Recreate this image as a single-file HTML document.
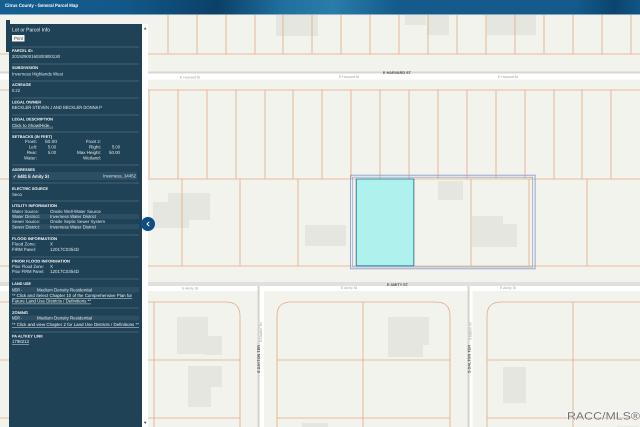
<!DOCTYPE html>
<html><head><meta charset="utf-8"><title>Citrus County - General Parcel Map</title>
<style>
html,body{margin:0;padding:0;width:640px;height:427px;overflow:hidden;background:#f3f3ee}
svg{display:block;filter:blur(.25px)}
text{font-family:"Liberation Sans",sans-serif;text-rendering:geometricPrecision}
.h{font-size:3.9px;font-weight:bold;fill:#f7f9fa}
.v{font-size:4.5px;fill:#dfe6ea}
.u{font-size:4.5px;fill:#eef2f4;text-decoration:underline}
.d{stroke:#4c6c7d;stroke-width:.7}
.l{stroke:#e3ab82;stroke-width:.8;fill:none}
.b{fill:#e6e6e1}
.s{font-size:3.4px;fill:#999}
.r{font-size:3.9px;font-weight:bold;fill:#555}
</style></head><body>
<svg width="640" height="427" viewBox="0 0 640 427" xmlns="http://www.w3.org/2000/svg">
<defs><linearGradient id="hd" x1="0" x2="1" y1="0" y2="0">
<stop offset="0" stop-color="#155f90"/><stop offset=".2" stop-color="#125788"/><stop offset=".34" stop-color="#0b4067"/><stop offset=".44" stop-color="#206f9f"/><stop offset=".52" stop-color="#2b7ca8"/><stop offset=".62" stop-color="#145b8c"/><stop offset=".9" stop-color="#145a8b"/><stop offset=".96" stop-color="#0c446f"/><stop offset="1" stop-color="#125585"/>
</linearGradient></defs>
<rect width="640" height="427" fill="#f3f3ee"/>
<!-- roads -->
<rect x="0" y="71.500" width="640" height="1.800" fill="#d6d6d2"/>
<rect x="0" y="74" width="640" height="5.500" fill="#fff"/>
<rect x="0" y="282" width="640" height="4" fill="#e0e0dc"/>
<rect x="0" y="286" width="640" height="5" fill="#fff"/>
<rect x="260" y="286" width="4" height="141" fill="#fff"/>
<rect x="470" y="286" width="2.500" height="141" fill="#fff"/>
<rect x="257.500" y="286" width="2" height="141" fill="#d4d4d1"/>
<rect x="467.500" y="286" width="2" height="141" fill="#d4d4d1"/>
<!-- buildings -->
<g class="b">
<rect x="276" y="15" width="42" height="21"/><rect x="405" y="15" width="21" height="10"/><rect x="427" y="15" width="22" height="20"/><rect x="487" y="15" width="49" height="20"/>
<rect x="168" y="193" width="42" height="27"/><rect x="153" y="202" width="36" height="26"/><rect x="305" y="225" width="41" height="21"/>
<rect x="438" y="181" width="25" height="19"/><rect x="472" y="216" width="31" height="30"/><rect x="472" y="224" width="45" height="23"/>
<rect x="177" y="317" width="31" height="37"/><rect x="205" y="336" width="17" height="19"/><rect x="188" y="366" width="34" height="21"/><rect x="188" y="385" width="23" height="22"/>
<rect x="302" y="423" width="26" height="4"/><rect x="388" y="317" width="41" height="28"/><rect x="388" y="345" width="35" height="12"/><rect x="503" y="367" width="23" height="36"/><rect x="617" y="426" width="21" height="1"/>
</g>
<!-- parcel lines -->
<path class="l" d="M0 54H640M168 15V54M197 15V54M226 15V54M255 15V54M283 15V54M312 15V54M341 15V54M370 15V54M399 15V54M428 15V54M457 15V54M486 15V54M515 15V54M544 15V54M573 15V54M602 15V54M631 15V54"/>
<path class="l" d="M0 90H640M149 90V179M178 90V179M207 90V179M236 90V179M265 90V179M293 90V179M322 90V179M351 90V179M380 90V179M409 90V179M438 90V179M467 90V179M496 90V179M525 90V179M554 90V179M582 90V179M611 90V179"/>
<path class="l" d="M0 179H640M0 266H640M182 179V266M240 179V266M298 179V266M356 179V266M414 179V266M471 179V266M529 179V266M587 179V266"/>
<path class="l" d="M0 302H226Q240 302 240 316V427M154 302V427M0 360H240M0 418H240"/>
<path class="l" d="M291 302H436Q450 302 450 316V427M291 302Q277 302 277 316V427M363 302V427M277 360H450M277 418H450"/>
<path class="l" d="M501 302H640M501 302Q487 302 487 316V427M573 302V427M487 360H640M487 418H640"/>
<!-- selection -->
<rect x="350.500" y="175.200" width="184.600" height="93.600" fill="none" stroke="#8d9fc9" stroke-width=".9"/>
<rect x="352.700" y="177.200" width="180" height="89.800" fill="none" stroke="#8d9fc9" stroke-width=".7"/>
<rect x="356.300" y="179" width="57.500" height="86.800" fill="#aef1ed" stroke="#2b7fa6" stroke-width=".9"/>
<!-- road labels -->
<text class="s" x="180" y="78.500" textLength="20" lengthAdjust="spacingAndGlyphs">E Harvard St</text>
<text class="s" x="339" y="78.200" textLength="20" lengthAdjust="spacingAndGlyphs">E Harvard St</text>
<text class="s" x="498" y="77.800" textLength="20" lengthAdjust="spacingAndGlyphs">E Harvard St</text>
<text class="r" x="383" y="74" textLength="28" lengthAdjust="spacingAndGlyphs">E HARVARD ST</text>
<text class="s" x="182" y="289.500" textLength="16" lengthAdjust="spacingAndGlyphs">E Amity St</text>
<text class="s" x="341" y="289" textLength="16" lengthAdjust="spacingAndGlyphs">E Amity St</text>
<text class="s" x="500" y="288.800" textLength="16" lengthAdjust="spacingAndGlyphs">E Amity St</text>
<text class="r" x="387" y="285.800" textLength="21" lengthAdjust="spacingAndGlyphs">E AMITY ST</text>
<text class="r" transform="translate(260 373) rotate(-90)" textLength="28" lengthAdjust="spacingAndGlyphs">S DAYTON TER</text>
<text class="s" transform="translate(262 342) rotate(-90)" textLength="20" lengthAdjust="spacingAndGlyphs">S Dayton Ter</text>
<text class="r" transform="translate(470.500 373) rotate(-90)" textLength="28" lengthAdjust="spacingAndGlyphs">S DALTON TER</text>
<text class="s" transform="translate(471.500 340) rotate(-90)" textLength="18" lengthAdjust="spacingAndGlyphs">S Dalton Ter</text>
<!-- header -->
<rect width="640" height="14.500" fill="url(#hd)"/>
<text x="5" y="6.900" font-size="4.800" font-weight="bold" fill="#f6f9fb" textLength="73" lengthAdjust="spacingAndGlyphs">Citrus County - General Parcel Map</text>
<!-- panel -->
<rect x="6" y="20" width="4" height="32" fill="#1f4256"/>
<rect x="142" y="24" width="6" height="403" fill="#fff"/>
<rect x="9" y="24" width="133" height="403" fill="#1f4256"/>
<path d="M143.700 29.500L145.200 27.300L146.700 29.500Z" fill="#555"/>
<path d="M143.700 421.700L145.200 424L146.700 421.700Z" fill="#555"/>
<text x="12" y="31.500" font-size="5.400" fill="#eaeff2" textLength="38" lengthAdjust="spacingAndGlyphs">Lot or Parcel Info</text>
<rect x="12" y="35" width="12.500" height="6.500" fill="#f6f6f6"/>
<text x="14" y="40" font-size="4.500" fill="#333" textLength="9" lengthAdjust="spacingAndGlyphs">Print</text>
<path class="d" d="M12 47H139M12 64H139M12 81H139M12 98H139M12 115H139M12 132H139M12 165H139M12 183H139M12 201H139M12 235H139M12 257H139M12 279H139M12 308H139M12 332H139"/>
<rect x="12" y="172" width="125" height="8" fill="#2c4f63"/>
<rect x="12" y="214" width="127" height="5" fill="#2c4f63"/>
<rect x="12" y="224.200" width="127" height="5" fill="#2c4f63"/>
<rect x="12" y="287" width="127" height="5.500" fill="#2c4f63"/>
<rect x="12" y="315.500" width="127" height="5" fill="#2c4f63"/>
<text class="h" x="12" y="52" textLength="21" lengthAdjust="spacingAndGlyphs">PARCEL ID:</text>
<text class="v" x="12" y="58" textLength="48" lengthAdjust="spacingAndGlyphs">20192900160300800130</text>
<text class="h" x="12" y="69" textLength="26" lengthAdjust="spacingAndGlyphs">SUBDIVISION</text>
<text class="v" x="12" y="75.300" textLength="51" lengthAdjust="spacingAndGlyphs">Inverness Highlands West</text>
<text class="h" x="12" y="86.200" textLength="19" lengthAdjust="spacingAndGlyphs">ACREAGE</text>
<text class="v" x="12" y="92" textLength="8" lengthAdjust="spacingAndGlyphs">0.22</text>
<text class="h" x="12" y="103.300" textLength="29" lengthAdjust="spacingAndGlyphs">LEGAL OWNER</text>
<text class="v" x="12" y="109" textLength="90" lengthAdjust="spacingAndGlyphs">BECKLER STEVEN J AND BECKLER DONNA P</text>
<text class="h" x="12" y="120.700" textLength="41" lengthAdjust="spacingAndGlyphs">LEGAL DESCRIPTION</text>
<text class="u" x="12" y="126.800" textLength="41" lengthAdjust="spacingAndGlyphs">Click to Show/Hide...</text>
<text class="h" x="12" y="137.800" textLength="40" lengthAdjust="spacingAndGlyphs">SETBACKS (IN FEET)</text>
<text class="v" x="25" y="143.200" textLength="12" lengthAdjust="spacingAndGlyphs">Front:</text>
<text class="v" x="45" y="143.200" textLength="12" lengthAdjust="spacingAndGlyphs">50.00</text>
<text class="v" x="86" y="143.200" textLength="15" lengthAdjust="spacingAndGlyphs">Front 2:</text>
<text class="v" x="29" y="148.700" textLength="8" lengthAdjust="spacingAndGlyphs">Left:</text>
<text class="v" x="48" y="148.700" textLength="8" lengthAdjust="spacingAndGlyphs">5.00</text>
<text class="v" x="89" y="148.700" textLength="12" lengthAdjust="spacingAndGlyphs">Right:</text>
<text class="v" x="112" y="148.700" textLength="8" lengthAdjust="spacingAndGlyphs">5.00</text>
<text class="v" x="27" y="154" textLength="10" lengthAdjust="spacingAndGlyphs">Rear:</text>
<text class="v" x="48" y="154" textLength="8" lengthAdjust="spacingAndGlyphs">5.00</text>
<text class="v" x="77" y="154" textLength="24" lengthAdjust="spacingAndGlyphs">Max Height:</text>
<text class="v" x="109" y="154" textLength="11" lengthAdjust="spacingAndGlyphs">50.00</text>
<text class="v" x="24" y="159.300" textLength="13" lengthAdjust="spacingAndGlyphs">Water:</text>
<text class="v" x="83" y="159.300" textLength="18" lengthAdjust="spacingAndGlyphs">Wetland:</text>
<text class="h" x="12" y="170.800" textLength="23" lengthAdjust="spacingAndGlyphs">ADDRESSES</text>
<text x="13" y="178" font-size="4.800" font-weight="bold" fill="#eef3f5" textLength="36" lengthAdjust="spacingAndGlyphs">✓ 6481 E Amity St</text>
<text class="v" x="103" y="177.500" textLength="33" lengthAdjust="spacingAndGlyphs">Inverness, 34452</text>
<text class="h" x="12" y="189.800" textLength="36" lengthAdjust="spacingAndGlyphs">ELECTRIC SOURCE</text>
<text class="v" x="12" y="195.800" textLength="10" lengthAdjust="spacingAndGlyphs">Seco</text>
<text class="h" x="12" y="207" textLength="45" lengthAdjust="spacingAndGlyphs">UTILITY INFORMATION</text>
<text class="v" x="12" y="212.800" textLength="27" lengthAdjust="spacingAndGlyphs">Water Source:</text>
<text class="v" x="50" y="212.800" textLength="51" lengthAdjust="spacingAndGlyphs">Onsite Well-Water Source</text>
<text class="v" x="12" y="217.900" textLength="28" lengthAdjust="spacingAndGlyphs">Water District:</text>
<text class="v" x="50" y="217.900" textLength="46" lengthAdjust="spacingAndGlyphs">Inverness Water District</text>
<text class="v" x="12" y="223.200" textLength="28" lengthAdjust="spacingAndGlyphs">Sewer Source:</text>
<text class="v" x="50" y="223.200" textLength="55" lengthAdjust="spacingAndGlyphs">Onsite Septic Sewer System</text>
<text class="v" x="12" y="228.300" textLength="28" lengthAdjust="spacingAndGlyphs">Sewer District:</text>
<text class="v" x="50" y="228.300" textLength="46" lengthAdjust="spacingAndGlyphs">Inverness Water District</text>
<text class="h" x="12" y="239.800" textLength="45" lengthAdjust="spacingAndGlyphs">FLOOD INFORMATION</text>
<text class="v" x="12" y="245.700" textLength="24" lengthAdjust="spacingAndGlyphs">Flood Zone:</text>
<text class="v" x="50" y="245.700" textLength="3" lengthAdjust="spacingAndGlyphs">X</text>
<text class="v" x="12" y="250.900" textLength="24" lengthAdjust="spacingAndGlyphs">FIRM Panel:</text>
<text class="v" x="50" y="250.900" textLength="29" lengthAdjust="spacingAndGlyphs">12017C0354D</text>
<text class="h" x="12" y="262.300" textLength="58" lengthAdjust="spacingAndGlyphs">PRIOR FLOOD INFORMATION</text>
<text class="v" x="12" y="268" textLength="32" lengthAdjust="spacingAndGlyphs">Prior Flood Zone:</text>
<text class="v" x="50" y="268" textLength="3" lengthAdjust="spacingAndGlyphs">X</text>
<text class="v" x="12" y="273.200" textLength="32" lengthAdjust="spacingAndGlyphs">Prior FIRM Panel:</text>
<text class="v" x="50" y="273.200" textLength="29" lengthAdjust="spacingAndGlyphs">12017C0354D</text>
<text class="h" x="12" y="284.800" textLength="19" lengthAdjust="spacingAndGlyphs">LAND USE</text>
<text class="v" x="12" y="291.300" textLength="10" lengthAdjust="spacingAndGlyphs">MDR -</text>
<text class="v" x="37" y="291.300" textLength="55" lengthAdjust="spacingAndGlyphs">Medium Density Residential</text>
<text class="u" x="12" y="297" textLength="120" lengthAdjust="spacingAndGlyphs">** Click and Select Chapter 10 of the Comprehensive Plan for</text>
<text class="u" x="12" y="302.700" textLength="79" lengthAdjust="spacingAndGlyphs">Future Land Use Districts / Definitions **</text>
<text class="h" x="12" y="313.800" textLength="16" lengthAdjust="spacingAndGlyphs">ZONING</text>
<text class="v" x="12" y="319.700" textLength="10" lengthAdjust="spacingAndGlyphs">MDR -</text>
<text class="v" x="37" y="319.700" textLength="55" lengthAdjust="spacingAndGlyphs">Medium Density Residential</text>
<text class="u" x="12" y="326" textLength="127" lengthAdjust="spacingAndGlyphs">** Click and view Chapter 2 for Land Use Districts / Definitions **</text>
<text class="h" x="12" y="337.300" textLength="31" lengthAdjust="spacingAndGlyphs">PA ALTKEY LINK</text>
<text class="u" x="12" y="343" textLength="17" lengthAdjust="spacingAndGlyphs">1798213</text>
<!-- collapse button -->
<circle cx="148" cy="224" r="7" fill="#0d4f85"/>
<path d="M149.300 221.800L147 224L149.300 226.200" fill="none" stroke="#fff" stroke-width="1"/>
<!-- watermark -->
<text x="567" y="419.500" font-size="10.500" fill="#6f6f6f" stroke="#fff" stroke-width=".7" paint-order="stroke" textLength="73" lengthAdjust="spacingAndGlyphs">RACC/MLS®</text>
</svg>
</body></html>
